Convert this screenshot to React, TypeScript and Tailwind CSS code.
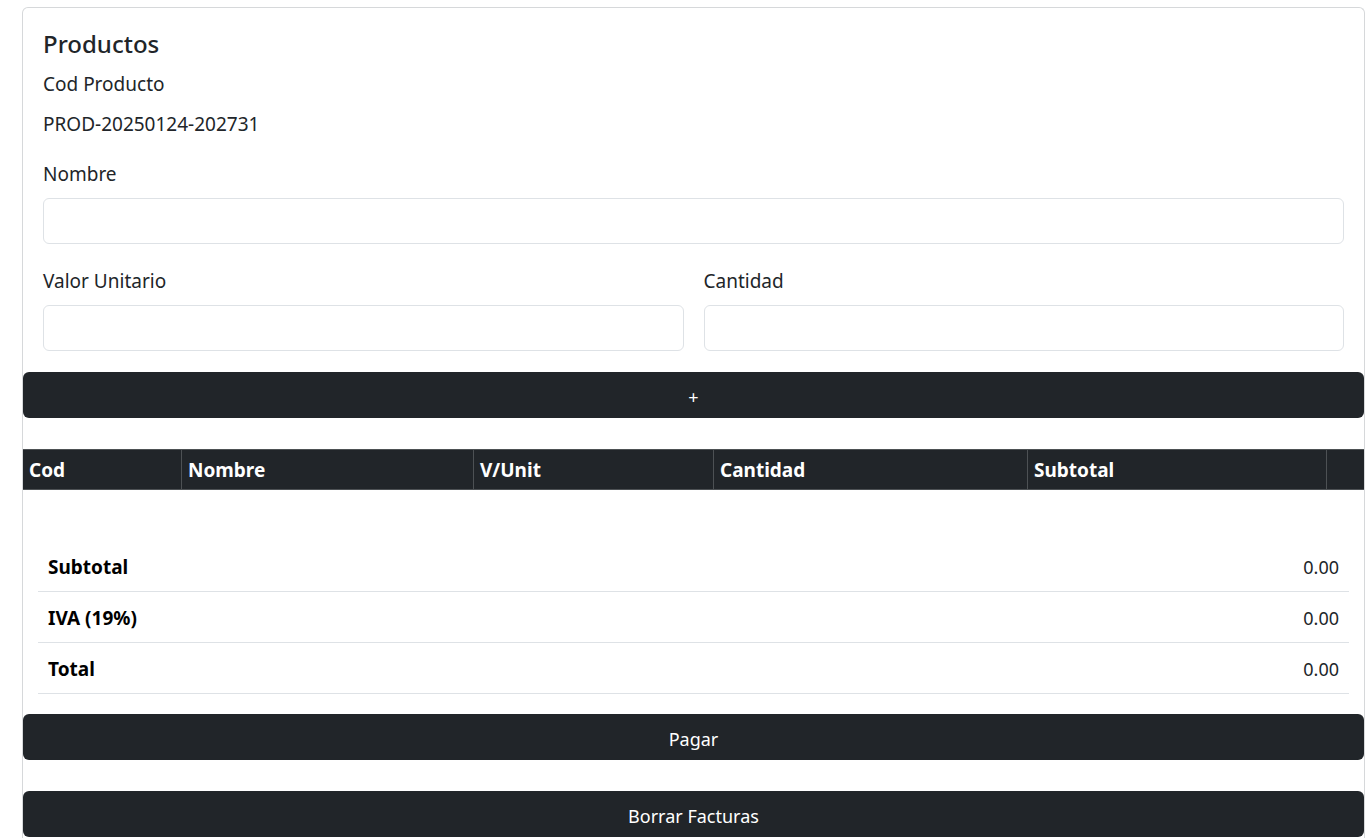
import React from 'react'

const font = { fontFamily: '"Segoe UI", "Noto Sans", "Open Sans", sans-serif' }

const columns = [
  { label: 'Cod', w: 'w-[158px]' },
  { label: 'Nombre', w: 'w-[292px]' },
  { label: 'V/Unit', w: 'w-[240px]' },
  { label: 'Cantidad', w: 'w-[314px]' },
  { label: 'Subtotal', w: 'w-[299px]' },
  { label: '', w: 'flex-1' },
]

const totals = [
  { label: 'Subtotal', value: '0.00' },
  { label: 'IVA (19%)', value: '0.00' },
  { label: 'Total', value: '0.00' },
]

function Field({ label }: { label: string }) {
  return (
    <div className="flex flex-col">
      <label className="text-[19px] leading-[24px] text-[#212529]">{label}</label>
      <input
        type="text"
        className="mt-[12px] h-[46px] w-full rounded-[6px] border border-[#dee2e6] bg-white px-3 outline-none"
      />
    </div>
  )
}

function DarkButton({ children }: { children: React.ReactNode }) {
  return (
    <button
      type="button"
      className="flex h-[46px] w-full items-center justify-center rounded-[6px] bg-[#212529] pt-[4px] text-[18px] text-white"
    >
      {children}
    </button>
  )
}

export default function App() {
  return (
    <div className="min-h-screen bg-white pl-[22px] pt-[7px]" style={font}>
      <div className="w-[1343px] rounded-t-[6px] border border-b-0 border-[#d6d8da] pb-[1px]">
        {/* Formulario */}
        <div className="px-[20px] pt-[21px]">
          <h4 className="text-[24px] font-medium leading-[29px] text-[#212529]">Productos</h4>
          <p className="mt-[14px] text-[19px] leading-[24px] text-[#212529]">Cod Producto</p>
          <p className="mt-[16px] text-[19px] leading-[24px] text-[#212529]">PROD-20250124-202731</p>
          <div className="mt-[26px]">
            <Field label="Nombre" />
          </div>
          <div className="mt-[25px] grid grid-cols-2 gap-[20px]">
            <Field label="Valor Unitario" />
            <Field label="Cantidad" />
          </div>
        </div>

        <div className="mt-[21px]">
          <DarkButton>+</DarkButton>
        </div>

        {/* Tabla de productos */}
        <div className="mt-[31px] flex h-[41px] border-y border-[#4d5154] bg-[#212529] text-white">
          {columns.map((c, i) => (
            <div
              key={i}
              className={`${c.w} flex items-center px-[6px] pt-[1px] text-[19px] font-bold ${i > 0 ? 'border-l border-[#4d5154]' : ''}`}
            >
              {c.label}
            </div>
          ))}
        </div>

        {/* Totales */}
        <div className="mt-[51px] px-[15px]">
          {totals.map((t) => (
            <div
              key={t.label}
              className="flex h-[51px] items-center justify-between border-b border-[#dee2e6] px-[10px] pt-[3px] text-[19px]"
            >
              <span className="font-bold text-black">{t.label}</span>
              <span className="text-[18px] text-[#212529]">{t.value}</span>
            </div>
          ))}
        </div>

        <div className="mt-[20px]">
          <DarkButton>Pagar</DarkButton>
        </div>
        <div className="mt-[31px]">
          <DarkButton>Borrar Facturas</DarkButton>
        </div>
      </div>
    </div>
  )
}
